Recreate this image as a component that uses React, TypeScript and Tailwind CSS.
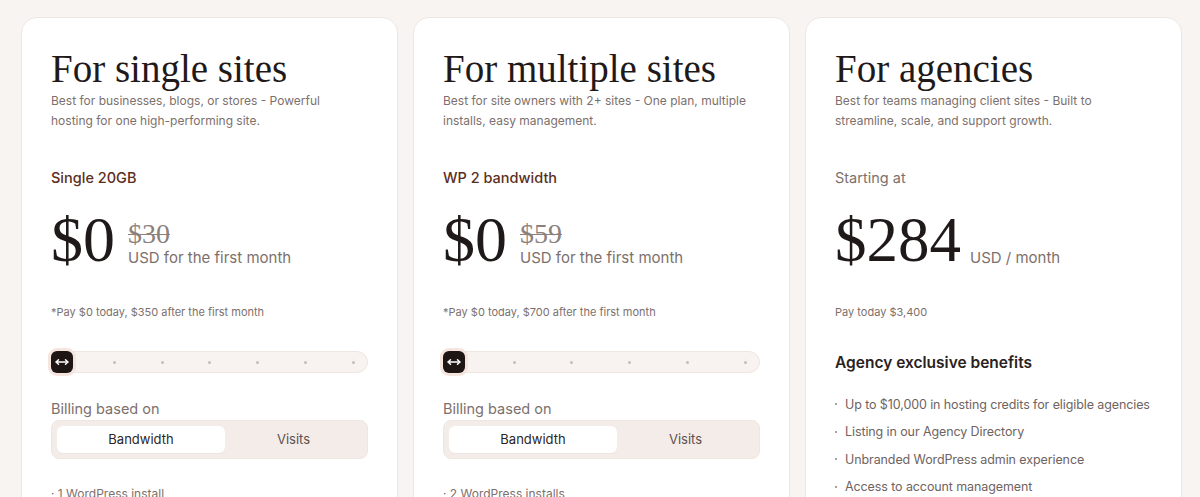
import { MoveHorizontal } from "lucide-react"

const serif = "font-['Liberation_Serif','DejaVu_Serif',serif]"

function Slider({ dots }: { dots: number[] }) {
  return (
    <div className="relative mt-[31px] h-[22px] w-[317px] rounded-full border border-[#f0e6e2] bg-[#f8f3f0]">
      <div className="absolute -left-[1px] -top-[1px] flex h-[22px] w-[22px] items-center justify-center rounded-[6px] bg-[#1d1614] shadow-[0_0_0_3px_#f6e4df]">
        <MoveHorizontal className="h-3.5 w-3.5 text-white" strokeWidth={2.5} />
      </div>
      {dots.map(x => (
        <span key={x} className="absolute top-[9px] h-[3px] w-[3px] rounded-full bg-[#c9bcb7]" style={{ left: x }} />
      ))}
    </div>
  )
}

function Billing() {
  return (
    <>
      <p className="mt-[25px] text-[14.5px] text-[#7d706c]">Billing based on</p>
      <div className="flex h-[39px] w-[317px] rounded-lg border border-[#efe6e2] bg-[#f4ece8] p-[5px]">
        <div className="flex w-[168px] items-center justify-center rounded-md bg-white text-[13px] text-[#2e2523] shadow-[0_1px_1px_rgba(0,0,0,0.03)]">Bandwidth</div>
        <div className="flex flex-1 items-center justify-center text-[13px] text-[#5e524f]">Visits</div>
      </div>
    </>
  )
}

function Card({ children }: { children: React.ReactNode }) {
  return (
    <div className="h-[500px] w-[377px] shrink-0 rounded-[16px] border border-[#efe6e2] bg-white px-[29px] pt-[29px]">
      {children}
    </div>
  )
}

function Head({ title, desc }: { title: string; desc: string[] }) {
  return (
    <>
      <h2 className={`${serif} text-[39px] leading-[44px] text-[#1f1a19]`}>{title}</h2>
      <p className="text-[12px] leading-[20px] text-[#7d706c]">
        {desc[0]}<br />{desc[1]}
      </p>
    </>
  )
}

function PlanPrice({ plan, old, note }: { plan: string; old: string; note: string }) {
  return (
    <>
      <p className="mt-[36px] text-[14.5px] font-medium text-[#5b2e22]">{plan}</p>
      <div className="mt-[21px] flex items-end">
        <span className={`${serif} text-[64px] leading-[60px] text-[#1f1a19]`}>$0</span>
        <div className="mb-[2px] ml-[13px] flex flex-col">
          <span className={`${serif} text-[28px] leading-[28px] text-[#8b807c] line-through decoration-1`}>{old}</span>
          <span className="text-[15px] leading-[20px] text-[#7d706c]">USD for the first month</span>
        </div>
      </div>
      <p className="mt-[34px] text-[11px] text-[#7d706c]">{note}</p>
    </>
  )
}

export default function App() {
  const benefits = [
    "Up to $10,000 in hosting credits for eligible agencies",
    "Listing in our Agency Directory",
    "Unbranded WordPress admin experience",
    "Access to account management",
  ]
  return (
    <div className="h-[497px] overflow-hidden bg-[#f8f4f1] font-['Inter','Noto_Sans',sans-serif]">
      <div className="flex gap-[15px] pl-[21px] pt-[17px]">
        <Card>
          <Head title="For single sites" desc={["Best for businesses, blogs, or stores - Powerful", "hosting for one high-performing site."]} />
          <PlanPrice plan="Single 20GB" old="$30" note="*Pay $0 today, $350 after the first month" />
          <Slider dots={[61, 109, 156, 204, 252, 300]} />
          <Billing />
          <p className="mt-[26px] text-[12px] text-[#7d706c]">· 1 WordPress install</p>
        </Card>
        <Card>
          <Head title="For multiple sites" desc={["Best for site owners with 2+ sites - One plan, multiple", "installs, easy management."]} />
          <PlanPrice plan="WP 2 bandwidth" old="$59" note="*Pay $0 today, $700 after the first month" />
          <Slider dots={[69, 126, 184, 242, 300]} />
          <Billing />
          <p className="mt-[26px] text-[12px] text-[#7d706c]">· 2 WordPress installs</p>
        </Card>
        <Card>
          <Head title="For agencies" desc={["Best for teams managing client sites - Built to", "streamline, scale, and support growth."]} />
          <p className="mt-[36px] text-[14.5px] text-[#7d706c]">Starting at</p>
          <div className="mt-[21px] flex items-end">
            <span className={`${serif} text-[63px] leading-[60px] text-[#1f1a19]`}>$284</span>
            <span className="mb-[2px] ml-[9px] text-[15px] leading-[20px] text-[#7d706c]">USD / month</span>
          </div>
          <p className="mt-[34px] text-[11px] text-[#7d706c]">Pay today $3,400</p>
          <h3 className="mt-[31px] text-[15.5px] font-semibold text-[#2a2220]">Agency exclusive benefits</h3>
          <ul className="mt-[20px] flex flex-col gap-[8px]">
            {benefits.map(b => (
              <li key={b} className="flex items-center whitespace-nowrap text-[12.5px] leading-[19.5px] tracking-[-0.1px] text-[#6f6360]">
                <span className="mr-[8px] h-[2px] w-[2px] rounded-full bg-[#8b807c]" />
                {b}
              </li>
            ))}
          </ul>
        </Card>
      </div>
    </div>
  )
}
